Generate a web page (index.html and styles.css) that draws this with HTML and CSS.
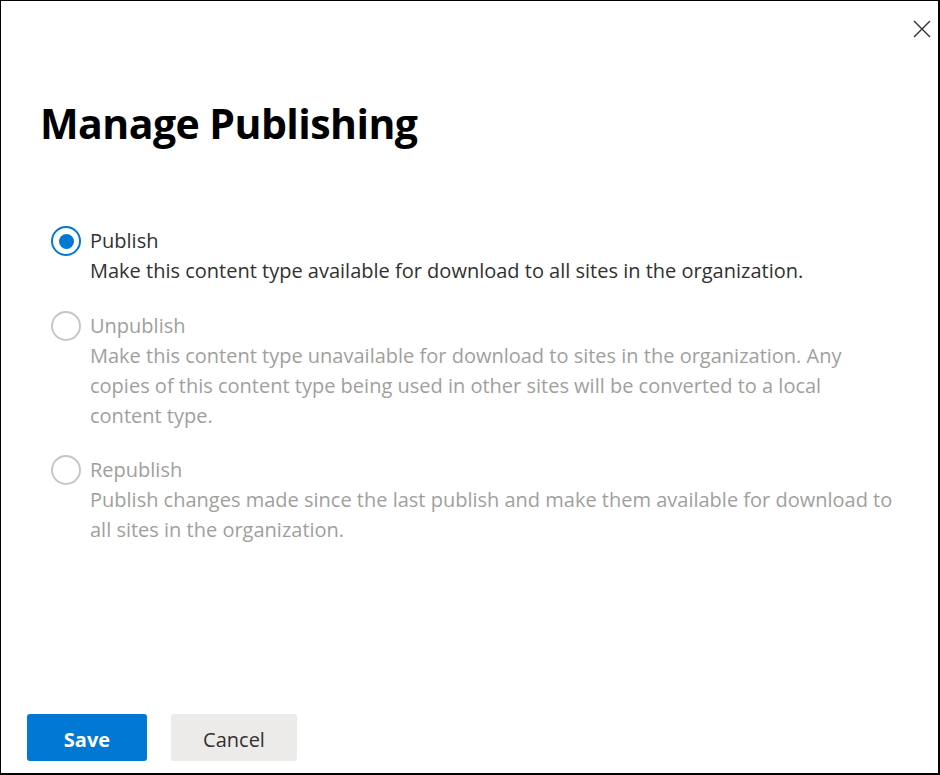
FILE: index.html
```html
<!DOCTYPE html>
<html lang="en">
<head>
<meta charset="utf-8">
<title>Manage Publishing</title>
<link rel="stylesheet" href="styles.css">
</head>
<body>
<div class="dialog">
  <button class="close" aria-label="Close">
    <svg width="18" height="18" viewBox="0 0 18 18"><path d="M1 1 L17 17 M17 1 L1 17" stroke="#323130" stroke-width="1.4" fill="none"/></svg>
  </button>
  <h1 class="title">Manage Publishing</h1>
  <div class="options">
    <div class="option">
      <span class="radio checked"><span class="dot"></span></span>
      <div class="text">
        <div class="label">Publish</div>
        <div class="desc">Make this content type available for download to all sites in the organization.</div>
      </div>
    </div>
    <div class="option disabled">
      <span class="radio"></span>
      <div class="text">
        <div class="label">Unpublish</div>
        <div class="desc">Make this content type unavailable for download to sites in the organization. Any copies of this content type being used in other sites will be converted to a local content type.</div>
      </div>
    </div>
    <div class="option disabled">
      <span class="radio"></span>
      <div class="text">
        <div class="label">Republish</div>
        <div class="desc">Publish changes made since the last publish and make them available for download to all sites in the organization.</div>
      </div>
    </div>
  </div>
  <div class="footer">
    <button class="btn primary">Save</button>
    <button class="btn secondary">Cancel</button>
  </div>
</div>
</body>
</html>
```
FILE: styles.css
```css
html, body {
  margin: 0;
  padding: 0;
  background: #fff;
}
body {
  font-family: "Open Sans", "Noto Sans", "Liberation Sans", sans-serif;
  color: #323130;
}
.dialog {
  position: relative;
  width: 940px;
  height: 775px;
  box-sizing: border-box;
  border-style: solid;
  border-color: #000;
  border-width: 1px 2px 2px 1px;
  display: flex;
  flex-direction: column;
}
.close {
  position: absolute;
  left: 912px;
  top: 19px;
  width: 18px;
  height: 18px;
  padding: 0;
  border: 0;
  background: transparent;
  display: flex;
}
.title {
  margin: 94px 0 0 39px;
  font-size: 41px;
  line-height: 56px;
  font-weight: 700;
  color: #000;
  letter-spacing: -0.55px;
}
.options {
  margin-top: 75px;
  padding-left: 50px;
  padding-right: 44px;
  display: flex;
  flex-direction: column;
  gap: 25px;
}
.option {
  display: flex;
  gap: 9px;
  align-items: flex-start;
}
.radio {
  flex: none;
  width: 30px;
  height: 30px;
  box-sizing: border-box;
  border-radius: 50%;
  border: 2px solid #c8c6c4;
  display: flex;
  align-items: center;
  justify-content: center;
}
.radio.checked {
  border-color: #0078d4;
}
.dot {
  width: 15px;
  height: 15px;
  border-radius: 50%;
  background: #0078d4;
}
.text {
  font-size: 20px;
  line-height: 30px;
  color: #323130;
}
.option.disabled .text {
  color: #a19f9d;
}
.option.disabled + .option.disabled {
  margin-top: -1px;
}
.footer {
  margin-top: auto;
  padding: 0 0 12px 26px;
  display: flex;
  gap: 24px;
}
.btn {
  height: 47px;
  border: 0;
  border-radius: 3px;
  font-family: inherit;
  font-size: 20px;
  line-height: 47px;
  font-weight: 700;
  padding: 2px 0 0;
}
.primary {
  width: 120px;
  background: #0078d4;
  color: #fff;
}
.secondary {
  width: 126px;
  background: #edebe9;
  color: #323130;
  font-weight: 400;
}
```
